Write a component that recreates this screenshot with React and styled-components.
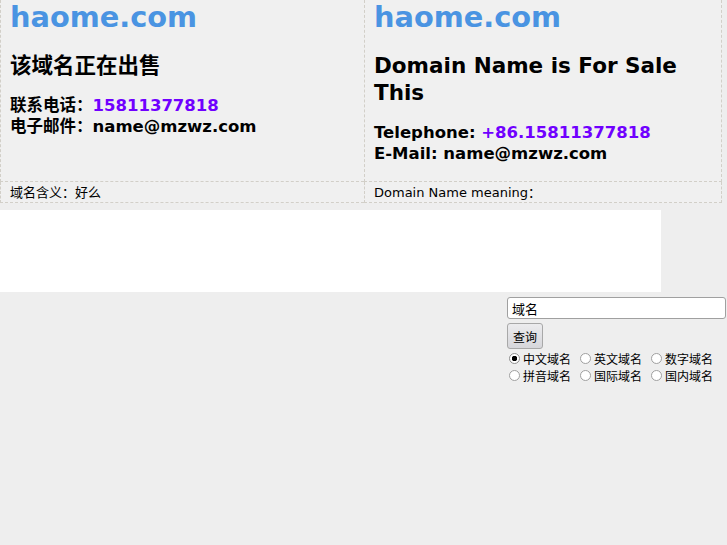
import React from "react";
import styled, { createGlobalStyle } from "styled-components";

const Global = createGlobalStyle`
  html, body { margin: 0; padding: 0; background: #eeeeee; }
  body { font-family: "DejaVu Sans", "Noto Sans CJK SC", sans-serif; color: #000; }
`;

const Board = styled.div`
  display: grid;
  grid-template-columns: 364px 358px;
  grid-template-rows: 182px 21px;
  width: 722px;
  background: #f0f0f0;
`;

const Cell = styled.div`
  border-left: 1px dashed #d2cfc8;
  border-right: ${(p) => (p.$last ? "1px dashed #d2cfc8" : "none")};
  border-bottom: 1px dashed #d2cfc8;
  padding: 0 9px;
  box-sizing: border-box;
  overflow: hidden;
`;

const FootCell = styled(Cell)`
  font-size: 13px;
  line-height: 20px;
  padding-top: 1px;
`;

const Brand = styled.h1`
  margin: 0;
  font-size: 28.8px;
  line-height: 34px;
  color: #4a94e2;
  font-weight: bold;
`;

const Title = styled.h2`
  margin: 18px 0 0;
  font-size: 21.5px;
  line-height: 27px;
  font-weight: bold;
`;

const Contact = styled.div`
  margin-top: ${(p) => p.$top}px;
  font-size: 16.5px;
  line-height: 21px;
  font-weight: bold;
`;

const Phone = styled.span`
  color: #7000ff;
`;

const AdSlot = styled.div`
  width: 661px;
  height: 82px;
  margin-top: 7px;
  background: #ffffff;
`;

const SearchArea = styled.div`
  display: flex;
  justify-content: flex-end;
  padding-top: 5px;
`;

const SearchForm = styled.form`
  width: 220px;
  display: flex;
  flex-direction: column;
  align-items: flex-start;
  font-size: 12px;
`;

const Query = styled.input`
  box-sizing: border-box;
  width: 219px;
  height: 22px;
  border: 1px solid #a0a0a0;
  border-radius: 3px;
  background: #fff;
  font-family: "DejaVu Sans", "Noto Sans CJK SC", sans-serif;
  font-size: 13px;
  padding: 0 4px;
`;

const Go = styled.button`
  margin-top: 4px;
  height: 26px;
  padding: 0 5px;
  white-space: nowrap;
  border: 1px solid #a8a8a8;
  border-radius: 3px;
  background: linear-gradient(#ececee, #d6d6da);
  font-family: "DejaVu Sans", "Noto Sans CJK SC", sans-serif;
  font-size: 12px;
  color: #000;
`;

const Options = styled.div`
  margin-top: 1px;
  display: grid;
  grid-template-columns: repeat(3, auto);
  column-gap: 7px;
  row-gap: 1px;
`;

const Opt = styled.label`
  display: flex;
  align-items: center;
  gap: 3px;
  height: 16px;
  font-size: 12px;
  white-space: nowrap;
`;

const Radio = styled.input`
  appearance: none;
  -webkit-appearance: none;
  box-sizing: border-box;
  margin: 0 0 0 2px;
  width: 11px;
  height: 11px;
  border: 1px solid #a0a0a0;
  border-radius: 50%;
  background: #fff;
  &:checked {
    background: radial-gradient(circle, #000 0 2.5px, #fff 3px);
    border-color: #909090;
  }
`;

const types = ["中文域名", "英文域名", "数字域名", "拼音域名", "国际域名", "国内域名"];

export default function App() {
  return (
    <>
      <Global />
      <Board>
        <Cell>
          <Brand>haome.com</Brand>
          <Title>该域名正在出售</Title>
          <Contact $top={16}>
            联系电话：<Phone>15811377818</Phone>
            <br />
            电子邮件：name@mzwz.com
          </Contact>
        </Cell>
        <Cell $last>
          <Brand>haome.com</Brand>
          <Title>
            Domain Name is For Sale
            <br />
            This
          </Title>
          <Contact $top={16}>
            Telephone: <Phone>+86.15811377818</Phone>
            <br />
            E-Mail: name@mzwz.com
          </Contact>
        </Cell>
        <FootCell>域名含义：好么</FootCell>
        <FootCell $last>Domain Name meaning：</FootCell>
      </Board>
      <AdSlot />
      <SearchArea>
        <SearchForm onSubmit={(e) => e.preventDefault()}>
          <Query defaultValue="域名" />
          <Go type="submit">查询</Go>
          <Options>
            {types.map((t, i) => (
              <Opt key={t}>
                <Radio type="radio" name="t" defaultChecked={i === 0} />
                {t}
              </Opt>
            ))}
          </Options>
        </SearchForm>
      </SearchArea>
    </>
  );
}
